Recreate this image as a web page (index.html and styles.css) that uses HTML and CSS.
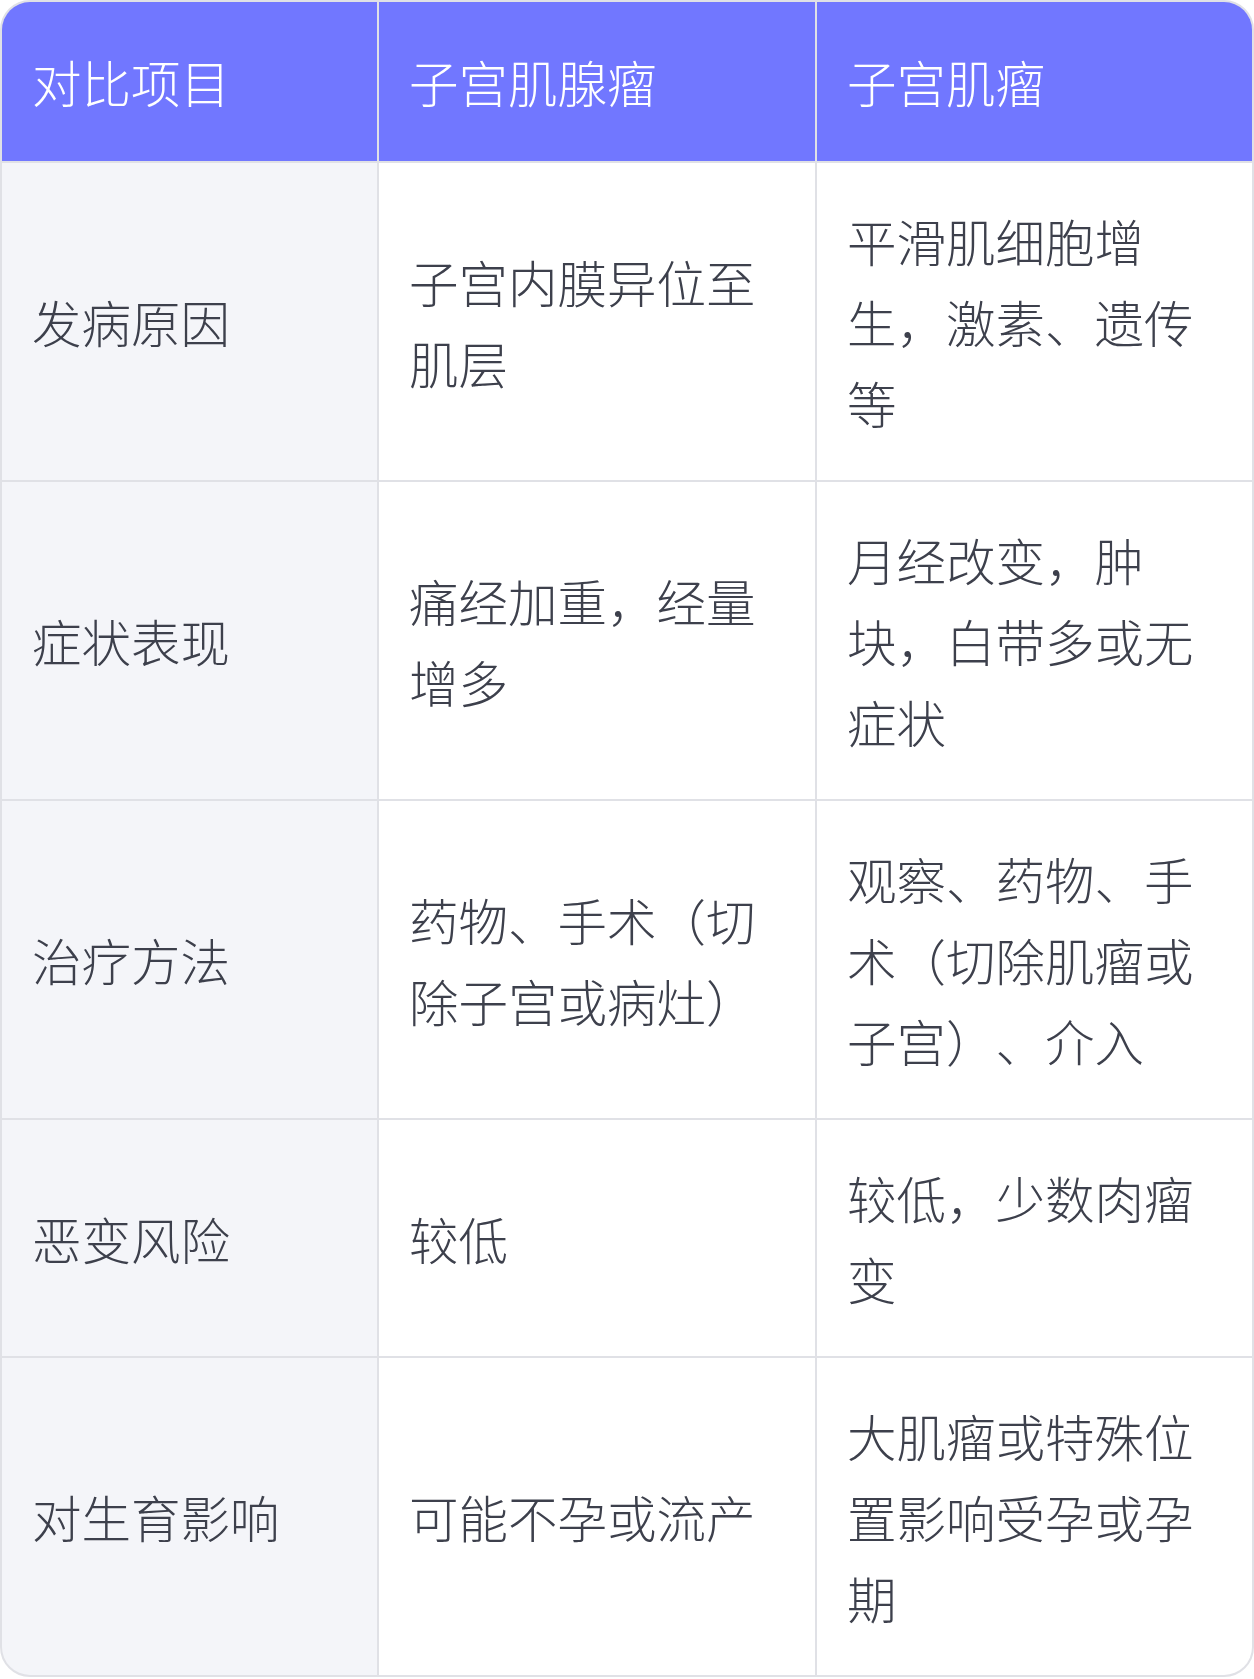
FILE: index.html
```html
<!DOCTYPE html>
<html lang="zh-CN">
<head>
<meta charset="utf-8">
<title>子宫肌腺瘤与子宫肌瘤对比</title>
<link rel="stylesheet" href="styles.css">
</head>
<body>
<div class="table">
  <div class="cell head">对比项目</div>
  <div class="cell head">子宫肌腺瘤</div>
  <div class="cell head">子宫肌瘤</div>

  <div class="cell label">发病原因</div>
  <div class="cell">子宫内膜异位至肌层</div>
  <div class="cell">平滑肌细胞增生，激素、遗传等</div>

  <div class="cell label">症状表现</div>
  <div class="cell">痛经加重，经量增多</div>
  <div class="cell">月经改变，肿块，白带多或无症状</div>

  <div class="cell label">治疗方法</div>
  <div class="cell">药物、手术（切除子宫或病灶）</div>
  <div class="cell">观察、药物、手术（切除肌瘤或子宫）、介入</div>

  <div class="cell label">恶变风险</div>
  <div class="cell">较低</div>
  <div class="cell">较低，少数肉瘤变</div>

  <div class="cell label">对生育影响</div>
  <div class="cell">可能不孕或流产</div>
  <div class="cell">大肌瘤或特殊位置影响受孕或孕期</div>
</div>
</body>
</html>
```

FILE: styles.css
```css
html, body {
  margin: 0;
  padding: 0;
  background: #ffffff;
}

body {
  font-family: "Noto Sans CJK SC", "Noto Sans", sans-serif;
}

.table {
  width: 1254px;
  box-sizing: border-box;
  display: grid;
  grid-template-columns: 375px 436px 1fr;
  gap: 2px;
  background: #e0e1e6;
  border: 2px solid #e0e1e6;
  border-radius: 30px;
  overflow: hidden;
}

.cell {
  display: flex;
  align-items: center;
  padding: 37px 30px 37px 30px;
  background: #ffffff;
  color: #3d404c;
  font-size: 49.5px;
  font-weight: 300;
  line-height: 81px;
  text-spacing-trim: space-all;
}

.cell.head {
  padding-top: 39px;
  padding-bottom: 39px;
  background: #7177ff;
  color: #ffffff;
}

.cell.label {
  background: #f4f5f9;
}
```
